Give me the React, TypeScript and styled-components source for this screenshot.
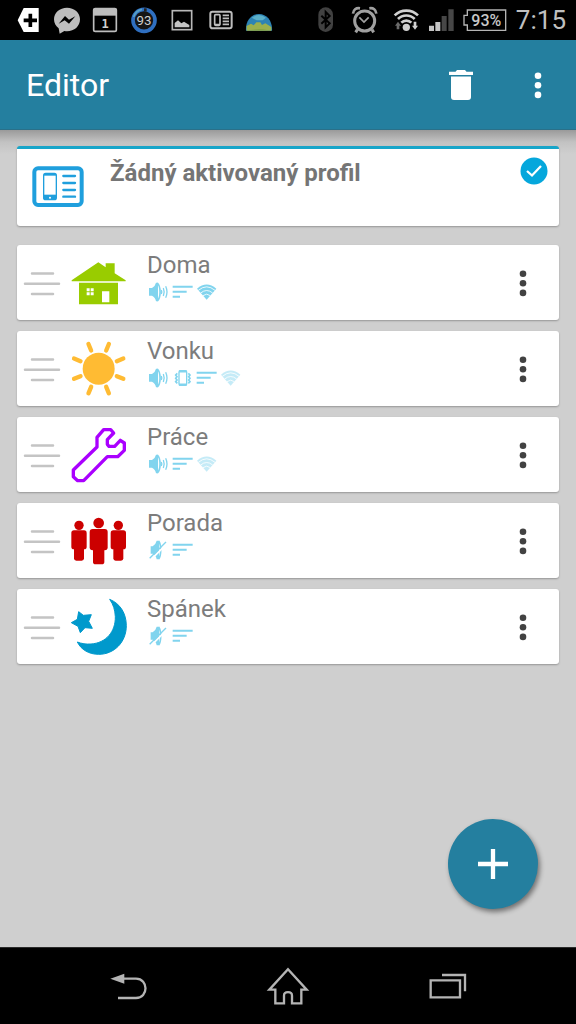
import React from "react";
import styled, { createGlobalStyle } from "styled-components";

const GlobalStyle = createGlobalStyle`
  *, *::before, *::after { box-sizing: border-box; }
  body { margin: 0; background: #cfcfcf; font-family: Roboto, "Noto Sans", sans-serif; }
  button { margin: 0; padding: 0; border: 0; background: none; font: inherit; cursor: pointer; }
  h1, h2, p, ul { margin: 0; padding: 0; }
  ul { list-style: none; }
  svg { display: block; overflow: visible; }
`;

const Screen = styled.div`
  display: flex;
  flex-direction: column;
  min-height: 100vh;
`;

/* ---------- Status bar ---------- */

const StatusBar = styled.div`
  display: flex;
  align-items: center;
  justify-content: space-between;
  height: 40px;
  padding: 0 10px 0 15px;
  background: #000;
`;

const Notifications = styled.div`
  display: flex;
  justify-content: space-between;
  width: 257px;
`;

const StatusGroup = styled.div<{ $gap: number }>`
  display: flex;
  align-items: center;
  gap: ${(p) => p.$gap}px;
`;

const Clock = styled.span`
  font-size: 26px;
  line-height: 26px;
  color: #c0c0c0;
`;

/* ---------- App bar ---------- */

const AppBar = styled.header`
  display: flex;
  align-items: center;
  height: 90px;
  padding: 0 18px 0 26px;
  background: #247f9f;
  border-bottom: 1px solid #2a7089;
`;

const Title = styled.h1`
  flex: 1;
  font-size: 32px;
  line-height: 40px;
  font-weight: 400;
  color: #fff;
`;

const Actions = styled.div`
  display: flex;
  gap: 37px;
`;

const IconButton = styled.button<{ $color: string }>`
  display: flex;
  align-items: center;
  justify-content: center;
  width: 40px;
  height: 48px;
  color: ${(p) => p.$color};
`;

/* ---------- Content ---------- */

const Content = styled.main`
  position: relative;
  flex: 1;
  padding: 16px 17px;
  background: linear-gradient(#9a9a9a, #c2c2c2 12px, #cfcfcf 24px);
`;

const Card = styled.div`
  background: #fff;
  border-radius: 3px;
  box-shadow: 0 1px 2px rgba(0, 0, 0, 0.28);
`;

const ActiveCard = styled(Card)`
  display: flex;
  align-items: flex-start;
  height: 80px;
  padding: 8px 11px 0 15px;
  border-top: 3px solid #17a5c9;
`;

const ActiveIcon = styled.div`
  width: 78px;
  padding-top: 9px;
`;

const ActiveName = styled.h2`
  flex: 1;
  font-size: 24px;
  line-height: 32px;
  font-weight: 700;
  color: #757575;
`;

const ProfileList = styled.ul`
  display: flex;
  flex-direction: column;
  gap: 11px;
  margin-top: 19px;
`;

const ProfileCard = styled(Card).attrs({ as: "li" })`
  display: flex;
  align-items: center;
  height: 75px;
  padding: 0 16px 0 6px;
`;

const ProfileIcon = styled.div`
  margin: 0 20px 0 10px;
`;

const ProfileText = styled.div`
  flex: 1;
  align-self: flex-start;
  padding-top: 6px;
`;

const ProfileName = styled.p`
  font-size: 24px;
  line-height: 28px;
  color: #7c7c7c;
`;

const Indicators = styled.div`
  display: flex;
  margin-top: 3px;
  color: #81d4ee;
`;

const AddButton = styled.button`
  position: absolute;
  right: 38px;
  bottom: 38px;
  display: flex;
  align-items: center;
  justify-content: center;
  width: 90px;
  height: 90px;
  border-radius: 50%;
  background: #247f9f;
  box-shadow: 2px 3px 5px rgba(0, 0, 0, 0.45);
`;

/* ---------- Navigation bar ---------- */

const NavBar = styled.nav`
  display: flex;
  justify-content: space-around;
  height: 77px;
  padding: 0 48px;
  background: #000;
  border-top: 1px solid #2b2b2b;
`;

const NavButton = styled.button`
  display: flex;
  align-items: center;
  justify-content: center;
  width: 80px;
  color: #b4b4b4;
`;

/* ---------- Icons ---------- */

type StatusIconProps = { width?: number; children: React.ReactNode };

const StatusIcon = ({ width = 26, children }: StatusIconProps) => (
  <svg width={width} height={26} viewBox={`0 0 ${width * 3} 78`} fill="none" aria-hidden="true">
    {children}
  </svg>
);

const NotificationIcons = () => (
  <Notifications>
    <StatusIcon>
      <path d="M8 40 26 3H71V75H26Z" fill="#fff" />
      <path d="M46 20V60M26 40H66" stroke="#000" strokeWidth="11" />
    </StatusIcon>
    <StatusIcon>
      <path
        d="M39 2C17 2 0 17 0 37C0 49 6 58 14 64L17 80L31 72C34 73 37 73 39 73C61 73 78 58 78 37C78 17 61 2 39 2Z"
        fill="#bdbdbd"
      />
      <path d="M14 50 33 27 45 38 64 28 45 50 32 40Z" fill="#000" />
    </StatusIcon>
    <StatusIcon>
      <rect x="5" y="5" width="68" height="68" rx="5" stroke="#bdbdbd" strokeWidth="5" />
      <path d="M4 5H74V26H4Z" fill="#bdbdbd" />
      <text x="39" y="63" textAnchor="middle" fontFamily="DejaVu Sans Mono" fontWeight="700" fontSize="36" fill="#d0d0d0">
        1
      </text>
    </StatusIcon>
    <StatusIcon>
      <circle cx="39" cy="40" r="33" fill="#151515" stroke="#2f6fc0" strokeWidth="11" />
      <path d="M8 30A33 33 0 0 1 33 7" stroke="#58a2c4" strokeWidth="5" />
      <path d="M43 4V14" stroke="#222" strokeWidth="8" />
      <text x="39" y="54" textAnchor="middle" fontFamily="Roboto" fontSize="40" fill="#cfcfcf">
        93
      </text>
    </StatusIcon>
    <StatusIcon>
      <rect x="10" y="11" width="58" height="57" stroke="#b8b8b8" strokeWidth="5" />
      <path d="M17 61V48L27 40L37 49L45 44L61 54V61Z" fill="#c4c4c4" />
    </StatusIcon>
    <StatusIcon>
      <rect x="7" y="14" width="64" height="50" rx="6" stroke="#bdbdbd" strokeWidth="6" />
      <rect x="20" y="23" width="16" height="32" rx="3" stroke="#bdbdbd" strokeWidth="5" />
      <path d="M20 53H36M44 25H63M44 34H63M44 43H63M44 52H63" stroke="#bdbdbd" strokeWidth="5" />
    </StatusIcon>
    <StatusIcon>
      <path d="M0 71C-2 43 15 21 39 21C63 21 80 43 78 71Z" fill="#2d83b4" />
      <path d="M17 32Q39 16 60 32L50 40H32Z" fill="#5bb0c9" />
      <path d="M2 71V57L15 50L23 55L31 46H43L48 54L58 49L76 60V71Z" fill="#9bb04c" />
      <path d="M12 70Q39 62 66 70Z" fill="#85a340" />
    </StatusIcon>
  </Notifications>
);

const SystemIcons = () => (
  <StatusGroup $gap={9}>
    <StatusGroup $gap={16}>
      <StatusIcon width={18}>
        <rect x="1" y="1" width="44" height="74" rx="22" fill="#414141" />
        <path d="M10 26 35 49 23 61V15L35 27 10 50" stroke="#000" strokeWidth="6" />
      </StatusIcon>
      <StatusIcon>
        <circle cx="38" cy="42" r="30" stroke="#a0a0a0" strokeWidth="9" />
        <path d="M3 20C4 8 12 2 24 4M73 20C72 8 64 2 52 4" stroke="#a0a0a0" strokeWidth="8" />
        <path d="M16 68 11 76M60 68 65 76" stroke="#a0a0a0" strokeWidth="9" />
        <path d="M22 31 36 45 50 31" stroke="#a0a0a0" strokeWidth="5" />
      </StatusIcon>
      <StatusIcon>
        <path
          d="M2 25A50 50 0 0 1 72 25M12 36A35 35 0 0 1 62 36M22 47A21 21 0 0 1 52 47"
          stroke="#d0d0d0"
          strokeWidth="8"
        />
        <circle cx="37" cy="61" r="11" fill="#d0d0d0" />
        <path d="M12 44 21 56H16V67H8V56H3Z" fill="#6a6a6a" />
        <path d="M63 68 54 56H59V44H67V56H72Z" fill="#d0d0d0" />
      </StatusIcon>
    </StatusGroup>
    <StatusIcon>
      <path d="M0 56H15V72H0ZM19 45H34V72H19Z" fill="#c4c4c4" />
      <path d="M38 27H53V72H38ZM58 7H74V72H58Z" fill="#474747" />
    </StatusIcon>
    <StatusIcon width={43}>
      <path d="M10 9H125V70H10V54H0V25H10Z" stroke="#b4b4b4" strokeWidth="4" />
      <text x="67" y="57" textAnchor="middle" fontFamily="Roboto" fontWeight="500" fontSize="48" fill="#c8c8c8">
        93%
      </text>
    </StatusIcon>
    <Clock>7:15</Clock>
  </StatusGroup>
);

const TrashIcon = () => (
  <svg width="24" height="30" viewBox="0 0 24 30" fill="#fff" aria-hidden="true">
    <path d="M0 1.700H6.500L8 0H16L17.500 1.700H24V5H0Z" />
    <path d="M2 6.500H22V27Q22 30 19 30H5Q2 30 2 27Z" />
  </svg>
);

const DotsIcon = () => (
  <svg width="8" height="28" viewBox="0 0 8 28" fill="currentColor" aria-hidden="true">
    <circle cx="4" cy="4.700" r="3.300" />
    <circle cx="4" cy="14.300" r="3.300" />
    <circle cx="4" cy="23.900" r="3.300" />
  </svg>
);

const AppIcon = () => (
  <svg width="52" height="42" viewBox="0 0 156 126" fill="none" aria-hidden="true">
    <rect x="7" y="7" width="142" height="110" rx="11" stroke="#1f9fdd" strokeWidth="12" />
    <rect x="33" y="20" width="42" height="83" rx="8" fill="#1f9fdd" />
    <rect x="37" y="29" width="34" height="57" fill="#fff" />
    <circle cx="54" cy="95" r="3" fill="#fff" />
    <path d="M94 30H129M94 51H129M94 72H129M94 92H129" stroke="#1f9fdd" strokeWidth="7" strokeLinecap="round" />
  </svg>
);

const CheckIcon = () => (
  <svg width="28" height="28" viewBox="0 0 28 28" fill="none" role="img" aria-label="Aktivní">
    <circle cx="14" cy="14" r="13.500" fill="#05a7dc" />
    <path d="M7 14 12 18.500 21 9" stroke="#fff" strokeWidth="2.300" />
  </svg>
);

const HandleIcon = () => (
  <svg width="38" height="28" viewBox="0 0 38 28" aria-hidden="true">
    <path
      d="M9 4.500H30M2 14.700H36M9 24.900H30"
      stroke="#c4c4c4"
      strokeWidth="2.500"
      strokeLinecap="round"
    />
  </svg>
);

const Picture = ({ children }: { children: React.ReactNode }) => (
  <svg width="56" height="56" viewBox="0 0 168 168" fill="none" aria-hidden="true">
    {children}
  </svg>
);

const HouseIcon = () => (
  <Picture>
    <path d="M82 22 104 37V25H131V55L164 76V79H2V76Z" fill="#99cc00" />
    <path d="M24 83H141V148H24Z" fill="#99cc00" />
    <path d="M93 109H115V142H93ZM47 100H56V109H47ZM59 100H68V109H59ZM47 112H56V121H47ZM59 112H68V121H59Z" fill="#fff" />
  </Picture>
);

const SunIcon = () => (
  <Picture>
    <circle cx="83" cy="83" r="48" fill="#ffbb33" />
    {[22.5, 67.5, 112.5, 157.5, 202.5, 247.5, 292.5, 337.5].map((angle) => (
      <path
        key={angle}
        d="M142 83H163"
        transform={`rotate(${angle} 83 83)`}
        stroke="#ffbb33"
        strokeWidth="13"
        strokeLinecap="round"
      />
    ))}
  </Picture>
);

const WrenchIcon = () => (
  <Picture>
    <path
      d="M98 8H119L128 18L109 38V52L114 58H131L148 40L160 48V70L140 89H109L38 161H20L7 149V129L78 60V31Z"
      stroke="#aa00ff"
      strokeWidth="10"
      strokeLinejoin="round"
    />
  </Picture>
);

const PeopleIcon = () => (
  <Picture>
    <g fill="#cc0000">
      {[24, 142].map((x) => (
        <g key={x}>
          <circle cx={x} cy="37" r="14" />
          <rect x={x - 23} y="52" width="46" height="57" rx="8" />
          <rect x={x - 15} y="88" width="30" height="55" rx="7" />
        </g>
      ))}
      <circle cx="83" cy="30" r="16" />
      <rect x="56" y="48" width="54" height="64" rx="9" />
      <rect x="66" y="88" width="34" height="66" rx="8" />
    </g>
  </Picture>
);

const MoonIcon = () => (
  <Picture>
    <g fill="#0099cc" stroke="#0099cc" strokeWidth="3" strokeLinejoin="round">
      <path d="M116 1C148 14 166 44 166 80C166 129 130 166 83 166C54 166 30 152 19 129C32 134 45 136 60 135C105 132 134 98 133 53C132 33 127 16 116 1Z" />
      <path d="M23 38 37 49 61 47 53 67 64 88 42 86 28 101 21 82 1 71 19 61Z" />
    </g>
  </Picture>
);

const Indicator = ({ opacity = 1, children }: { opacity?: number; children: React.ReactNode }) => (
  <svg
    width="24"
    height="20"
    viewBox="0 0 72 60"
    fill="none"
    stroke="currentColor"
    opacity={opacity}
    aria-hidden="true"
  >
    {children}
  </svg>
);

const SoundIcon = () => (
  <Indicator>
    <path d="M6 18H15Q25 12 27 2H33V58H27Q25 46 15 41H6Z" fill="currentColor" stroke="none" />
    <path d="M31 3C42 14 42 46 31 57" strokeWidth="5" />
    <path d="M43 24Q46 30 43 36M49 18Q54 30 49 42M56 13Q64 30 56 47" strokeWidth="4" />
  </Indicator>
);

const MuteIcon = () => (
  <Indicator>
    <path d="M11 19H17Q27 12 29 2H36V58H29Q27 46 17 41H11Z" fill="currentColor" stroke="none" />
    <path d="M35 3C43 14 43 46 35 57" strokeWidth="5" />
    <path d="M12 59 61 10" stroke="#fff" strokeWidth="5" />
    <path d="M8 55 57 6" strokeWidth="4" />
  </Indicator>
);

const VibrateIcon = () => (
  <Indicator>
    <rect x="24" y="8" width="23" height="44" rx="4" strokeWidth="4" />
    <path d="M24 10H47M24 50H47" strokeWidth="7" />
    <path d="M19 16 14 21 18 26 14 31 18 36 14 41 19 46M52 16 57 21 53 26 57 31 53 36 57 41 52 46" strokeWidth="5" />
  </Indicator>
);

const VolumesIcon = () => (
  <Indicator>
    <path d="M5 14H65M5 29H47M5 44H27" strokeWidth="6" />
  </Indicator>
);

const WifiIcon = ({ opacity }: { opacity?: number }) => (
  <Indicator opacity={opacity}>
    <path d="M6 20Q35 -5 64 20L35 53Z" fill="currentColor" stroke="none" />
    <path d="M10 25Q35 4 60 25M17 33Q35 18 53 33M24 41Q35 32 46 41" stroke="#fff" strokeWidth="2.500" />
  </Indicator>
);

type Profile = {
  name: string;
  icon: React.ReactNode;
  indicators: React.ReactNode;
};

const profiles: Profile[] = [
  { name: "Doma", icon: <HouseIcon />, indicators: <><SoundIcon /><VolumesIcon /><WifiIcon /></> },
  {
    name: "Vonku",
    icon: <SunIcon />,
    indicators: <><SoundIcon /><VibrateIcon /><VolumesIcon /><WifiIcon opacity={0.45} /></>,
  },
  { name: "Práce", icon: <WrenchIcon />, indicators: <><SoundIcon /><VolumesIcon /><WifiIcon opacity={0.45} /></> },
  { name: "Porada", icon: <PeopleIcon />, indicators: <><MuteIcon /><VolumesIcon /></> },
  { name: "Spánek", icon: <MoonIcon />, indicators: <><MuteIcon /><VolumesIcon /></> },
];

export default function App() {
  return (
    <Screen>
      <GlobalStyle />
      <StatusBar>
        <NotificationIcons />
        <SystemIcons />
      </StatusBar>
      <AppBar>
        <Title>Editor</Title>
        <Actions>
          <IconButton $color="#fff" aria-label="Smazat">
            <TrashIcon />
          </IconButton>
          <IconButton $color="#fff" aria-label="Další možnosti">
            <DotsIcon />
          </IconButton>
        </Actions>
      </AppBar>
      <Content>
        <ActiveCard>
          <ActiveIcon>
            <AppIcon />
          </ActiveIcon>
          <ActiveName>Žádný aktivovaný profil</ActiveName>
          <CheckIcon />
        </ActiveCard>
        <ProfileList>
          {profiles.map((profile) => (
            <ProfileCard key={profile.name}>
              <HandleIcon />
              <ProfileIcon>{profile.icon}</ProfileIcon>
              <ProfileText>
                <ProfileName>{profile.name}</ProfileName>
                <Indicators>{profile.indicators}</Indicators>
              </ProfileText>
              <IconButton $color="#424242" aria-label={`Možnosti profilu ${profile.name}`}>
                <DotsIcon />
              </IconButton>
            </ProfileCard>
          ))}
        </ProfileList>
        <AddButton aria-label="Přidat profil">
          <svg width="30" height="30" viewBox="0 0 30 30" aria-hidden="true">
            <path d="M15 0V30M0 15H30" stroke="#fff" strokeWidth="4.300" />
          </svg>
        </AddButton>
      </Content>
      <NavBar>
        <NavButton aria-label="Zpět">
          <svg width="38" height="28" viewBox="0 0 114 84" fill="none" aria-hidden="true">
            <path d="M4 20 46 5V35Z" fill="currentColor" />
            <path d="M42 20H81C119 20 119 78 81 78H27" stroke="currentColor" strokeWidth="7" />
          </svg>
        </NavButton>
        <NavButton aria-label="Domů">
          <svg width="42" height="38" viewBox="0 0 126 114" fill="none" aria-hidden="true">
            <path
              d="M63 7 119 68H103V109H75V86C75 72 51 72 51 86V109H25V68H7Z"
              stroke="currentColor"
              strokeWidth="7"
            />
          </svg>
        </NavButton>
        <NavButton aria-label="Poslední aplikace">
          <svg width="38" height="26" viewBox="0 0 114 78" fill="none" aria-hidden="true">
            <path d="M5 22H93V73H5ZM39 6H108V55" stroke="currentColor" strokeWidth="7" />
          </svg>
        </NavButton>
      </NavBar>
    </Screen>
  );
}
